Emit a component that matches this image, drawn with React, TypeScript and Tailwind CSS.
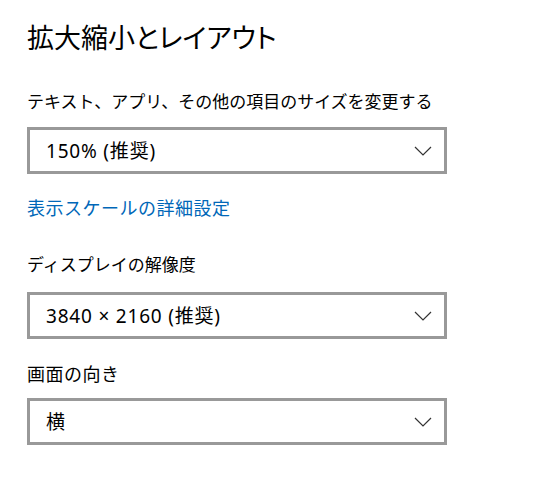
import React from 'react';

interface DropdownProps {
  value: string;
}

const Chevron: React.FC = () => (
  <svg width="18" height="10" viewBox="0 0 18 10" fill="none" className="shrink-0">
    <path d="M1 1 L9 9 L17 1" stroke="#333" strokeWidth="1.2" />
  </svg>
);

// Windows-style combo box
const Dropdown: React.FC<DropdownProps> = ({ value }) => (
  <div className="flex h-[47px] w-[420px] items-center justify-between border-[3px] border-[#999999] bg-white pl-[16px] pr-[12px]">
    <span className="text-[19px] leading-[24px] tracking-[0.8px] text-black">{value}</span>
    <Chevron />
  </div>
);

export default function App() {
  return (
    <div className="min-h-[482px] w-[553px] bg-white px-[27px] pt-[20px] font-['Noto_Sans','Noto_Sans_CJK_JP',sans-serif] text-black">
      <h1 className="text-[27px] leading-[36px] font-normal [font-feature-settings:'palt']">拡大縮小とレイアウト</h1>

      <p className="mt-[34px] text-[17px] leading-[24px]">テキスト、アプリ、その他の項目のサイズを変更する</p>
      <div className="mt-[13px]">
        <Dropdown value="150% (推奨)" />
      </div>

      <a className="mt-[22px] block text-[18px] leading-[24px] tracking-[0.5px] text-[#0067b8]">表示スケールの詳細設定</a>

      <p className="mt-[33px] text-[17px] leading-[24px]">ディスプレイの解像度</p>
      <div className="mt-[15px]">
        <Dropdown value="3840 × 2160 (推奨)" />
      </div>

      <p className="mt-[23px] text-[18px] leading-[24px] tracking-[0.5px]">画面の向き</p>
      <div className="mt-[12px]">
        <Dropdown value="横" />
      </div>
    </div>
  );
}
